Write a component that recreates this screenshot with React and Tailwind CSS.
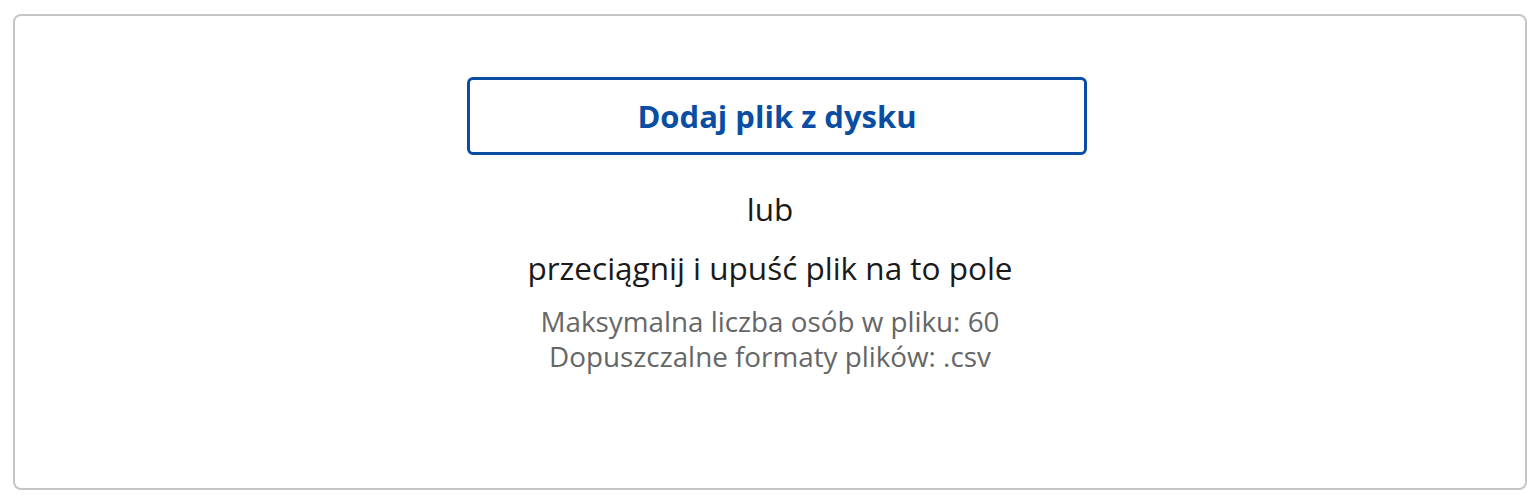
export default function App() {
  return (
    <div className="w-full h-[504px] bg-white pt-[14px] pl-[13px] pr-[13px]" style={{ fontFamily: '"Open Sans", sans-serif' }}>
      <div className="w-[1514px] h-[476px] border-2 border-[#c6c6c6] rounded-[8px] flex flex-col items-center pt-[61px]">
        <div className="w-[634px] pl-[14px]">
          <button className="w-[620px] h-[78px] border-[3px] border-[#0a4ea3] rounded-[6px] bg-white text-[#0a4ea3] text-[31px] font-bold">
            Dodaj plik z dysku
          </button>
        </div>
        <p className="mt-[33px] text-[31.5px] leading-[42px] text-[#1a1a1a]">lub</p>
        <p className="mt-[17px] text-[31.5px] leading-[42px] text-[#1a1a1a]">przeciągnij i upuść plik na to pole</p>
        <div className="mt-[15px] text-[27.8px] leading-[35px] text-[#666666] text-center">
          <p>Maksymalna liczba osób w pliku: 60</p>
          <p>Dopuszczalne formaty plików: .csv</p>
        </div>
      </div>
    </div>
  );
}
